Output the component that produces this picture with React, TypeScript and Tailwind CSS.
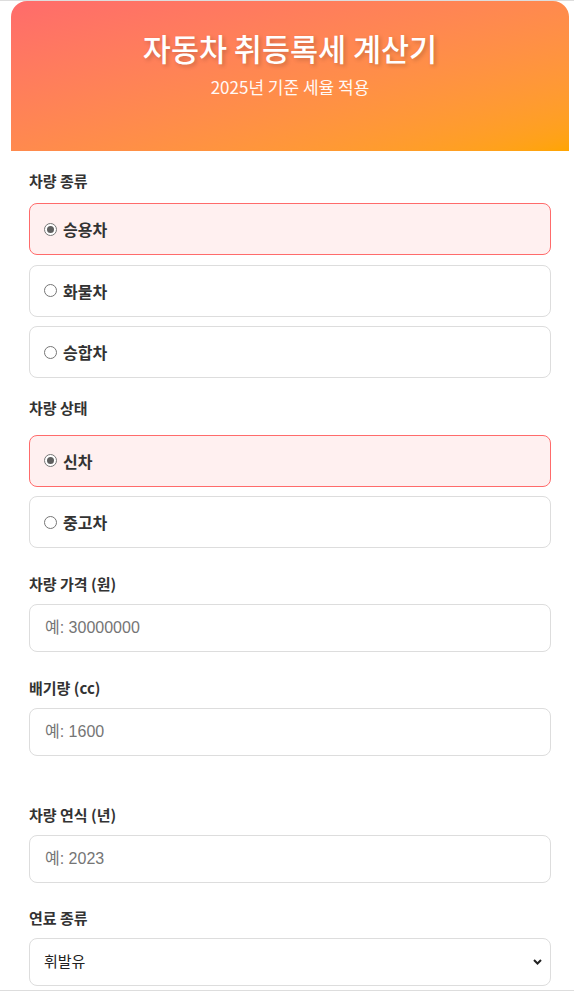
import { useState } from "react";

const kr = "font-['Noto_Sans_CJK_KR','Noto_Sans',sans-serif]";

function RadioRow({ label, checked, onClick }: { label: string; checked: boolean; onClick: () => void }) {
  return (
    <button
      type="button"
      onClick={onClick}
      className={`flex h-[52px] w-full items-center gap-[6px] rounded-lg border pl-[14px] text-left ${
        checked ? "border-[#ff6b6b] bg-[#fff0f0]" : "border-[#dddddd] bg-white"
      }`}
    >
      <span className="flex h-[13px] w-[13px] items-center justify-center rounded-full border border-[#767676] bg-white">
        {checked && <span className="h-[7px] w-[7px] rounded-full bg-[#5f5f5f]" />}
      </span>
      <span className={`${kr} text-[16px] font-bold leading-[22px] text-[#333]`}>{label}</span>
    </button>
  );
}

function FieldLabel({ children, className = "" }: { children: React.ReactNode; className?: string }) {
  return (
    <div className={`${kr} text-[15px] font-bold leading-[20px] text-[#333] ${className}`}>{children}</div>
  );
}

function TextField({ placeholder }: { placeholder: string }) {
  return (
    <input
      type="text"
      placeholder={placeholder}
      className="h-[48px] w-full rounded-lg border border-[#dddddd] bg-white px-[15px] font-['Liberation_Sans','Noto_Sans_CJK_KR',sans-serif] text-[16px] text-[#333] outline-none placeholder:text-[#757575]"
    />
  );
}

export default function App() {
  const [kind, setKind] = useState("승용차");
  const [state, setState] = useState("신차");

  return (
    <div className="h-[991px] overflow-hidden border-y border-[#dddddd] bg-white pl-[11px] pr-[5px]">
      <div className="bg-white">
        <header className="rounded-t-[16px] bg-gradient-to-br from-[#ff6b6b] to-[#ffa500] px-5 pb-[52px] pt-[27px] text-center text-white">
          <h1 className={`${kr} text-[30.5px] font-medium leading-[40px] [text-shadow:2px_2px_4px_rgba(0,0,0,0.2)]`}>
            자동차 취등록세 계산기
          </h1>
          <p className={`${kr} mt-[7px] text-[17px] leading-[24px] opacity-95`}>2025년 기준 세율 적용</p>
        </header>

        <div className="flex flex-col px-[18px] pt-5">
          <div>
            <FieldLabel className="mb-3">차량 종류</FieldLabel>
            <div className="flex flex-col gap-[9.5px]">
              {["승용차", "화물차", "승합차"].map((k) => (
                <RadioRow key={k} label={k} checked={kind === k} onClick={() => setKind(k)} />
              ))}
            </div>
          </div>

          <div className="mt-[19.5px]">
            <FieldLabel className="mb-[17px]">차량 상태</FieldLabel>
            <div className="flex flex-col gap-[9.5px]">
              {["신차", "중고차"].map((k) => (
                <RadioRow key={k} label={k} checked={state === k} onClick={() => setState(k)} />
              ))}
            </div>
          </div>

          <div className="mt-[25.5px]">
            <FieldLabel className="mb-[10px]">차량 가격 (원)</FieldLabel>
            <TextField placeholder="예: 30000000" />
          </div>

          <div className="mt-[26px]">
            <FieldLabel className="mb-[10px]">배기량 (cc)</FieldLabel>
            <TextField placeholder="예: 1600" />
          </div>

          <div className="mt-[49px]">
            <FieldLabel className="mb-[10px]">차량 연식 (년)</FieldLabel>
            <TextField placeholder="예: 2023" />
          </div>

          <div className="mt-[25px]">
            <FieldLabel className="mb-[10px]">연료 종류</FieldLabel>
            <div className="relative">
              <select
                defaultValue="휘발유"
                className={`${kr} h-[48px] w-full appearance-none rounded-lg border border-[#dddddd] bg-white px-[14px] text-[15px] text-[#222] outline-none`}
              >
                <option>휘발유</option>
                <option>경유</option>
                <option>LPG</option>
                <option>전기</option>
                <option>하이브리드</option>
              </select>
              <svg
                className="pointer-events-none absolute right-[9px] top-[21px]"
                width="9"
                height="6"
                viewBox="0 0 9 6"
              >
                <path d="M1 1l3.5 3.5L8 1" fill="none" stroke="#222" strokeWidth="2" />
              </svg>
            </div>
          </div>
        </div>
      </div>
    </div>
  );
}
